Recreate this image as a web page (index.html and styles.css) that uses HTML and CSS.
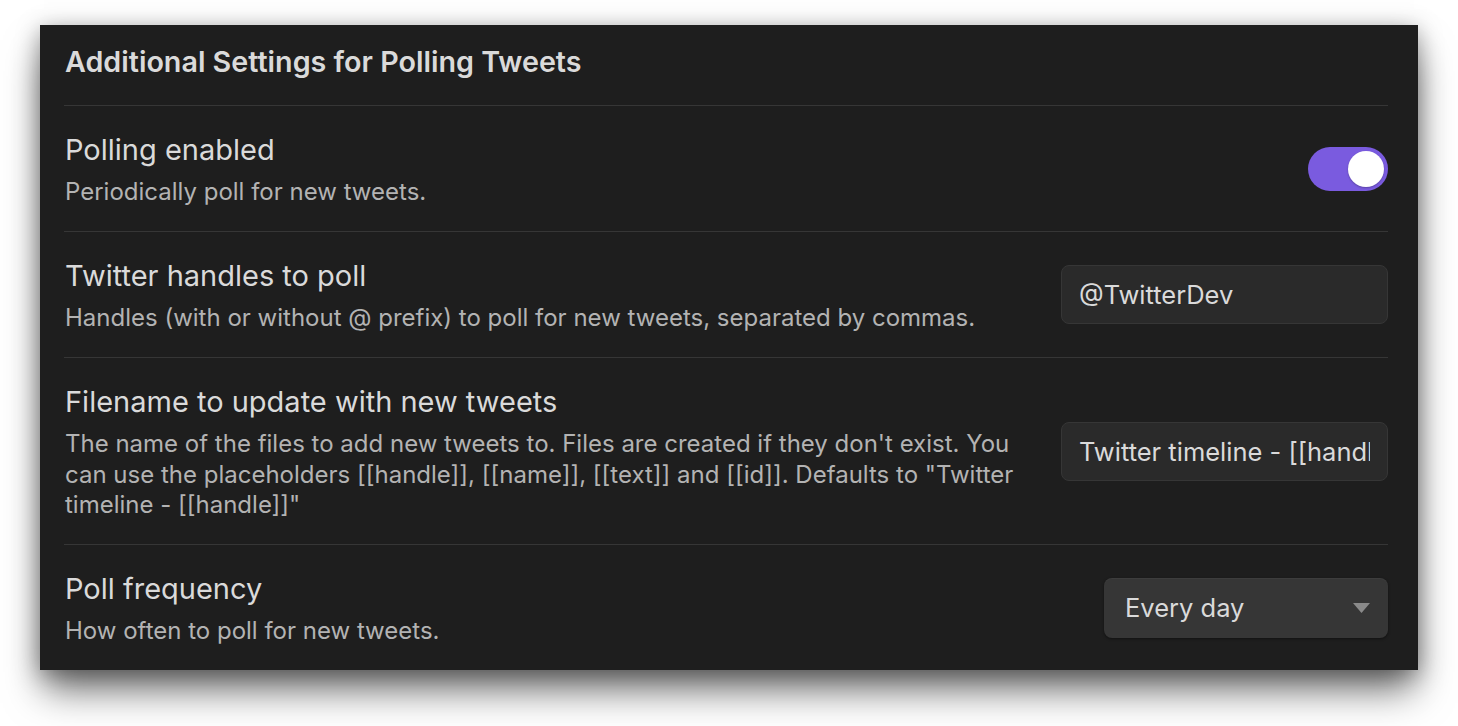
FILE: index.html
```html
<!DOCTYPE html>
<html>
<head>
<meta charset="utf-8">
<link rel="stylesheet" href="styles.css">
</head>
<body>
<div class="stage">
  <div class="panel">
    <div class="heading">Additional Settings for Polling Tweets</div>

    <div class="item">
      <div class="info">
        <div class="name">Polling enabled</div>
        <div class="desc">Periodically poll for new tweets.</div>
      </div>
      <div class="control">
        <div class="toggle"><div class="knob"></div></div>
      </div>
    </div>

    <div class="item">
      <div class="info">
        <div class="name">Twitter handles to poll</div>
        <div class="desc">Handles (with or without @ prefix) to poll for new tweets, separated by commas.</div>
      </div>
      <div class="control">
        <input class="input" type="text" value="@TwitterDev" readonly>
      </div>
    </div>

    <div class="item">
      <div class="info">
        <div class="name">Filename to update with new tweets</div>
        <div class="desc">The name of the files to add new tweets to. Files are created if they don't exist. You can use the placeholders [[handle]], [[name]], [[text]] and [[id]]. Defaults to "Twitter timeline - [[handle]]"</div>
      </div>
      <div class="control">
        <input class="input" type="text" value="Twitter timeline - [[handle]]" readonly>
      </div>
    </div>

    <div class="item last">
      <div class="info">
        <div class="name">Poll frequency</div>
        <div class="desc">How often to poll for new tweets.</div>
      </div>
      <div class="control">
        <div class="select">
          <span>Every day</span>
          <svg class="caret" width="17" height="10" viewBox="0 0 17 10"><path d="M0 0 H17 L8.5 10 Z" fill="#8a8a8a"/></svg>
        </div>
      </div>
    </div>
  </div>
</div>
</body>
</html>
```

FILE: styles.css
```css
html, body {
  margin: 0;
  padding: 0;
  background: #ffffff;
}
body {
  font-family: Inter, "Noto Sans", "Liberation Sans", sans-serif;
  width: 1458px;
  height: 726px;
  overflow: hidden;
}
.stage {
  padding: 25px 40px 0 40px;
}
.panel {
  background: #1e1e1e;
  height: 645px;
  box-sizing: border-box;
  padding: 0 30px 0 24px;
  box-shadow: 0 24px 36px -4px rgba(0, 0, 0, 0.55), 0 4px 22px rgba(0, 0, 0, 0.35);
}
.heading {
  color: #dadada;
  font-size: 28.7px;
  font-weight: 600;
  line-height: 38px;
  padding: 18px 0 24px 1px;
  border-bottom: 1px solid #363636;
}
.item {
  display: flex;
  align-items: center;
  padding: 24px 0;
  border-bottom: 1px solid #363636;
}
.item.last {
  border-bottom: none;
}
.info {
  flex: 1;
  min-width: 0;
  padding-left: 1px;
  margin-right: 22px;
}
.name {
  color: #dadada;
  font-size: 29px;
  line-height: 38px;
  margin-top: 1px;
}
.desc {
  color: #b3b3b3;
  font-size: 24px;
  line-height: 30.7px;
  margin-top: 8px;
  margin-bottom: -0.7px;
}
.control {
  flex: none;
  display: flex;
  justify-content: flex-end;
}
.toggle {
  width: 80px;
  height: 44px;
  border-radius: 22px;
  background: #7a5bdf;
  display: flex;
  align-items: center;
  justify-content: flex-end;
  padding: 0 4px;
  box-sizing: border-box;
}
.knob {
  width: 36px;
  height: 36px;
  border-radius: 50%;
  background: #ffffff;
  box-shadow: 0 1px 2px rgba(0, 0, 0, 0.25);
}
.input {
  display: block;
  width: 327px;
  height: 59px;
  box-sizing: border-box;
  margin: 0;
  background: #2a2a2a;
  border: 1px solid #363636;
  border-radius: 8px;
  color: #dadada;
  font-family: Inter, "Noto Sans", "Liberation Sans", sans-serif;
  font-size: 25.5px;
  padding: 0 17px;
  outline: none;
}
.select {
  width: 284px;
  height: 60px;
  box-sizing: border-box;
  background: #363636;
  border-radius: 8px;
  box-shadow: 0 1px 3px rgba(0, 0, 0, 0.45), inset 0 1px 0 rgba(255, 255, 255, 0.04);
  color: #dadada;
  font-size: 25.5px;
  display: flex;
  align-items: center;
  justify-content: space-between;
  padding: 0 18px 0 21px;
}
.caret {
  display: block;
}
```
